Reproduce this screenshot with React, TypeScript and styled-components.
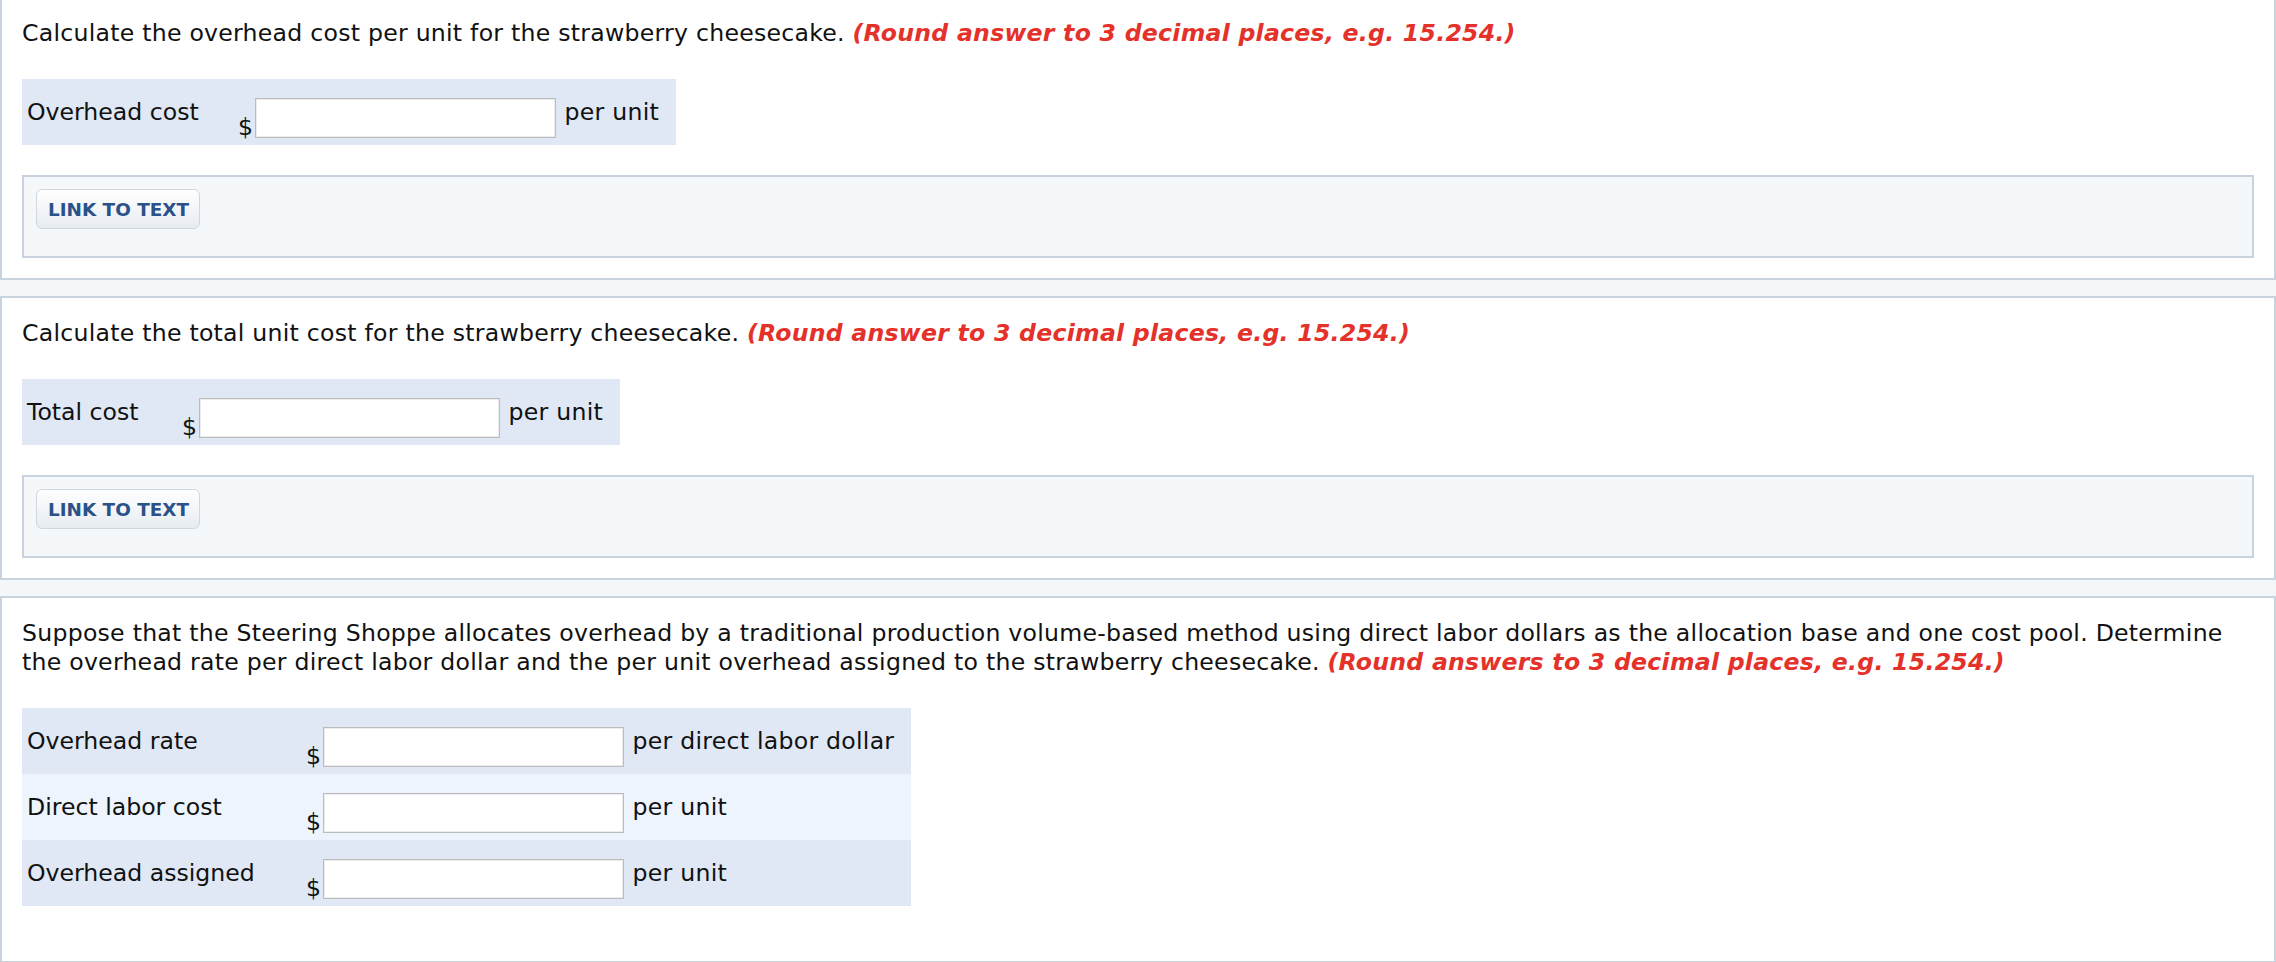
import React from "react";
import styled, { createGlobalStyle } from "styled-components";

const Global = createGlobalStyle`
  html, body { margin: 0; padding: 0; }
  body {
    background: #f4f7fa;
    font-family: "DejaVu Sans", Verdana, "Liberation Sans", sans-serif;
    color: #111;
    font-size: 23.6px;
    line-height: 29px;
    letter-spacing: 0.25px;
  }
`;

const Page = styled.div`
  display: flex;
  flex-direction: column;
  gap: 16px;
  min-height: 963px;
`;

const Panel = styled.section<{ $cut?: boolean; $grow?: boolean }>`
  background: #fff;
  border: 2px solid #c9d3dd;
  border-top: ${(p) => (p.$cut ? "none" : "2px solid #c9d3dd")};
  padding: ${(p) => (p.$cut ? "19px" : "21px")} 20px 20px 20px;
  flex: ${(p) => (p.$grow ? "1 0 auto" : "0 0 auto")};
`;

const Question = styled.p`
  margin: 0 0 31px 0;
`;

const Hint = styled.span`
  color: #e4312a;
  font-weight: bold;
  font-style: italic;
`;

const AnswerTable = styled.table`
  border-collapse: collapse;
  border-spacing: 0;
`;

const Row = styled.tr<{ $light?: boolean }>`
  height: 66px;
  background: ${(p) => (p.$light ? "#edf4fd" : "#dfe8f4")};
`;

const LabelCell = styled.td<{ $w: number }>`
  vertical-align: top;
  padding: 19px 0 0 5px;
  width: ${(p) => p.$w - 5}px;
  white-space: nowrap;
  letter-spacing: 0;
`;

const FieldCell = styled.td`
  vertical-align: top;
  padding: 0;
`;

const Field = styled.div`
  display: flex;
  align-items: flex-start;
`;

const Dollar = styled.span`
  margin-top: 34px;
  width: 16.6px;
`;

const Input = styled.input`
  box-sizing: border-box;
  width: 301px;
  height: 40px;
  margin: 19px 0 0 0;
  border: 1px solid #bcbcbc;
  box-shadow: inset 0 0 0 1px #ececec;
  background: #fff;
  font: inherit;
  padding: 0 6px;
  outline: none;
`;

const UnitCell = styled.td`
  vertical-align: top;
  padding: 19px 17px 0 9px;
  white-space: nowrap;
`;

const LinkBox = styled.div`
  margin-top: 30px;
  background: #f5f8fb;
  border: 2px solid #c9d3dd;
  padding: 12px 12px 27px 12px;
`;

const LinkButton = styled.button`
  box-sizing: border-box;
  height: 40px;
  width: 164px;
  border: 1px solid #d0d7df;
  border-radius: 6px;
  background: linear-gradient(#ffffff, #e7ecf1);
  color: #2b5189;
  font-family: "DejaVu Sans", Verdana, sans-serif;
  font-weight: bold;
  font-size: 18.4px;
  letter-spacing: 0;
  padding: 0 0 0 1px;
  display: flex;
  align-items: center;
  justify-content: center;
  cursor: pointer;
`;

type Line = { label: string; unit: string };

function Answers({ lines, labelWidth }: { lines: Line[]; labelWidth: number }) {
  return (
    <AnswerTable>
      <tbody>
        {lines.map((l, i) => (
          <Row key={l.label} $light={i % 2 === 1}>
            <LabelCell $w={labelWidth}>{l.label}</LabelCell>
            <FieldCell>
              <Field>
                <Dollar>$</Dollar>
                <Input type="text" aria-label={l.label} />
              </Field>
            </FieldCell>
            <UnitCell>{l.unit}</UnitCell>
          </Row>
        ))}
      </tbody>
    </AnswerTable>
  );
}

export default function App() {
  return (
    <>
      <Global />
      <Page>
        <Panel $cut>
          <Question>
            Calculate the overhead cost per unit for the strawberry cheesecake.{" "}
            <Hint>(Round answer to 3 decimal places, e.g. 15.254.)</Hint>
          </Question>
          <Answers labelWidth={216} lines={[{ label: "Overhead cost", unit: "per unit" }]} />
          <LinkBox>
            <LinkButton>LINK TO TEXT</LinkButton>
          </LinkBox>
        </Panel>
        <Panel>
          <Question>
            Calculate the total unit cost for the strawberry cheesecake.{" "}
            <Hint>(Round answer to 3 decimal places, e.g. 15.254.)</Hint>
          </Question>
          <Answers labelWidth={160} lines={[{ label: "Total cost", unit: "per unit" }]} />
          <LinkBox>
            <LinkButton>LINK TO TEXT</LinkButton>
          </LinkBox>
        </Panel>
        <Panel $grow>
          <Question>
            Suppose that the Steering Shoppe allocates overhead by a traditional production
            volume-based method using direct labor dollars as the allocation base and one cost
            pool. Determine the overhead rate per direct labor dollar and the per unit overhead
            assigned to the strawberry cheesecake.{" "}
            <Hint>(Round answers to 3 decimal places, e.g. 15.254.)</Hint>
          </Question>
          <Answers
            labelWidth={284}
            lines={[
              { label: "Overhead rate", unit: "per direct labor dollar" },
              { label: "Direct labor cost", unit: "per unit" },
              { label: "Overhead assigned", unit: "per unit" },
            ]}
          />
        </Panel>
      </Page>
    </>
  );
}
